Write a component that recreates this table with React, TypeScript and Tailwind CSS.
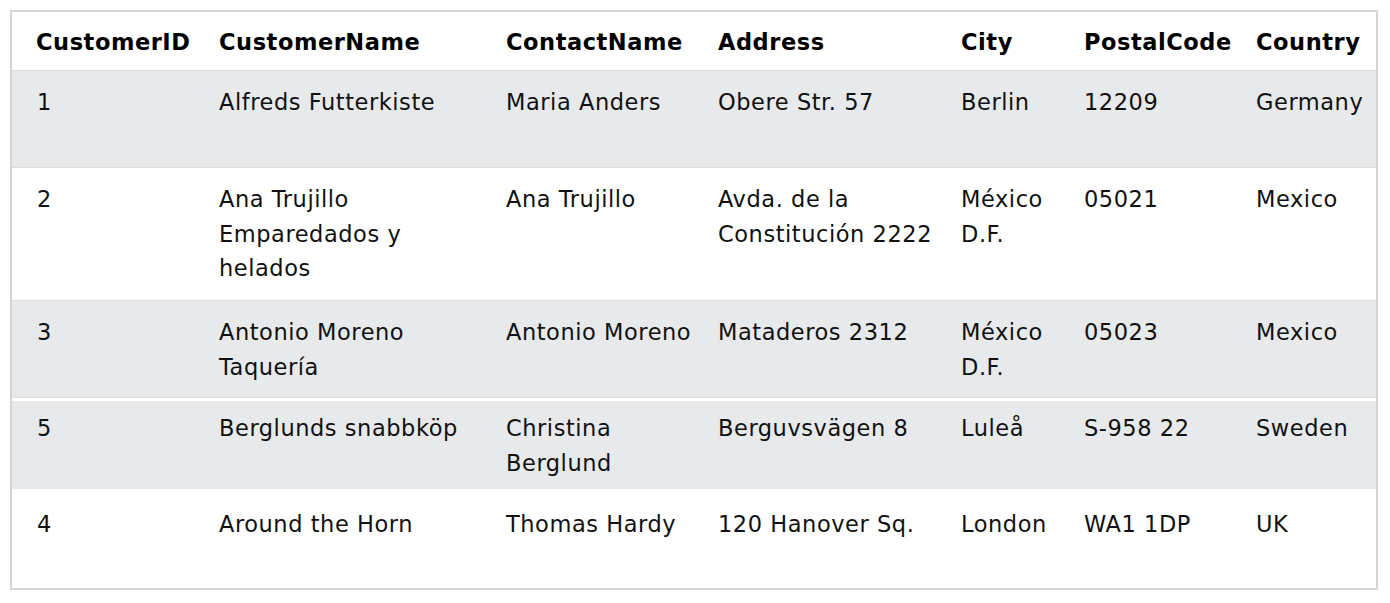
const columns = ["CustomerID", "CustomerName", "ContactName", "Address", "City", "PostalCode", "Country"];

type Row = { cells: string[][]; className: string; pad: string };

const rows: Row[] = [
  {
    cells: [["1"], ["Alfreds Futterkiste"], ["Maria Anders"], ["Obere Str. 57"], ["Berlin"], ["12209"], ["Germany"]],
    className: "h-[97px] bg-[#e7e9eb] border-b border-[#dddddd]",
    pad: "pt-[14px]",
  },
  {
    cells: [
      ["2"],
      ["Ana Trujillo", "Emparedados y", "helados"],
      ["Ana Trujillo"],
      ["Avda. de la", "Constitución 2222"],
      ["México", "D.F."],
      ["05021"],
      ["Mexico"],
    ],
    className: "h-[133px] bg-white border-b border-[#dddddd]",
    pad: "pt-[14px]",
  },
  {
    cells: [["3"], ["Antonio Moreno", "Taquería"], ["Antonio Moreno"], ["Mataderos 2312"], ["México", "D.F."], ["05023"], ["Mexico"]],
    className: "h-[97px] bg-[#e7e9eb] border-b border-[#dddddd]",
    pad: "pt-[14px]",
  },
  {
    cells: [["5"], ["Berglunds snabbköp"], ["Christina", "Berglund"], ["Berguvsvägen 8"], ["Luleå"], ["S-958 22"], ["Sweden"]],
    className: "h-[91px] bg-[#e7e9eb] border-t-[3px] border-white",
    pad: "pt-[10px]",
  },
  {
    cells: [["4"], ["Around the Horn"], ["Thomas Hardy"], ["120 Hanover Sq."], ["London"], ["WA1 1DP"], ["UK"]],
    className: "h-[99px] bg-white",
    pad: "pt-[18px]",
  },
];

const grid = "grid grid-cols-[196px_287px_212px_243px_123px_172px_1fr]";

export default function App() {
  return (
    <div className="min-h-[603px] bg-white pt-[10px] pl-[10px] font-['DejaVu_Sans',Verdana,sans-serif] text-[22.5px] leading-[34.5px] tracking-[0.55px]">
      <div className="w-[1368px] border-2 border-[#d5d5d5] text-[#111]">
        <div className={`${grid} h-[59px] border-b border-[#dddddd] bg-white font-bold text-black`}>
          {columns.map((col, i) => (
            <div key={col} className={`pt-[13px] whitespace-nowrap ${i === 0 ? "pl-[24px]" : "pl-[11px]"}`}>
              {col}
            </div>
          ))}
        </div>
        {rows.map((row, r) => (
          <div key={r} className={`${grid} ${row.className}`}>
            {row.cells.map((lines, i) => (
              <div key={i} className={`${row.pad} whitespace-nowrap ${i === 0 ? "pl-[25px]" : "pl-[11px]"}`}>
                {lines.map((line, j) => (
                  <div key={j}>{line}</div>
                ))}
              </div>
            ))}
          </div>
        ))}
      </div>
    </div>
  );
}
